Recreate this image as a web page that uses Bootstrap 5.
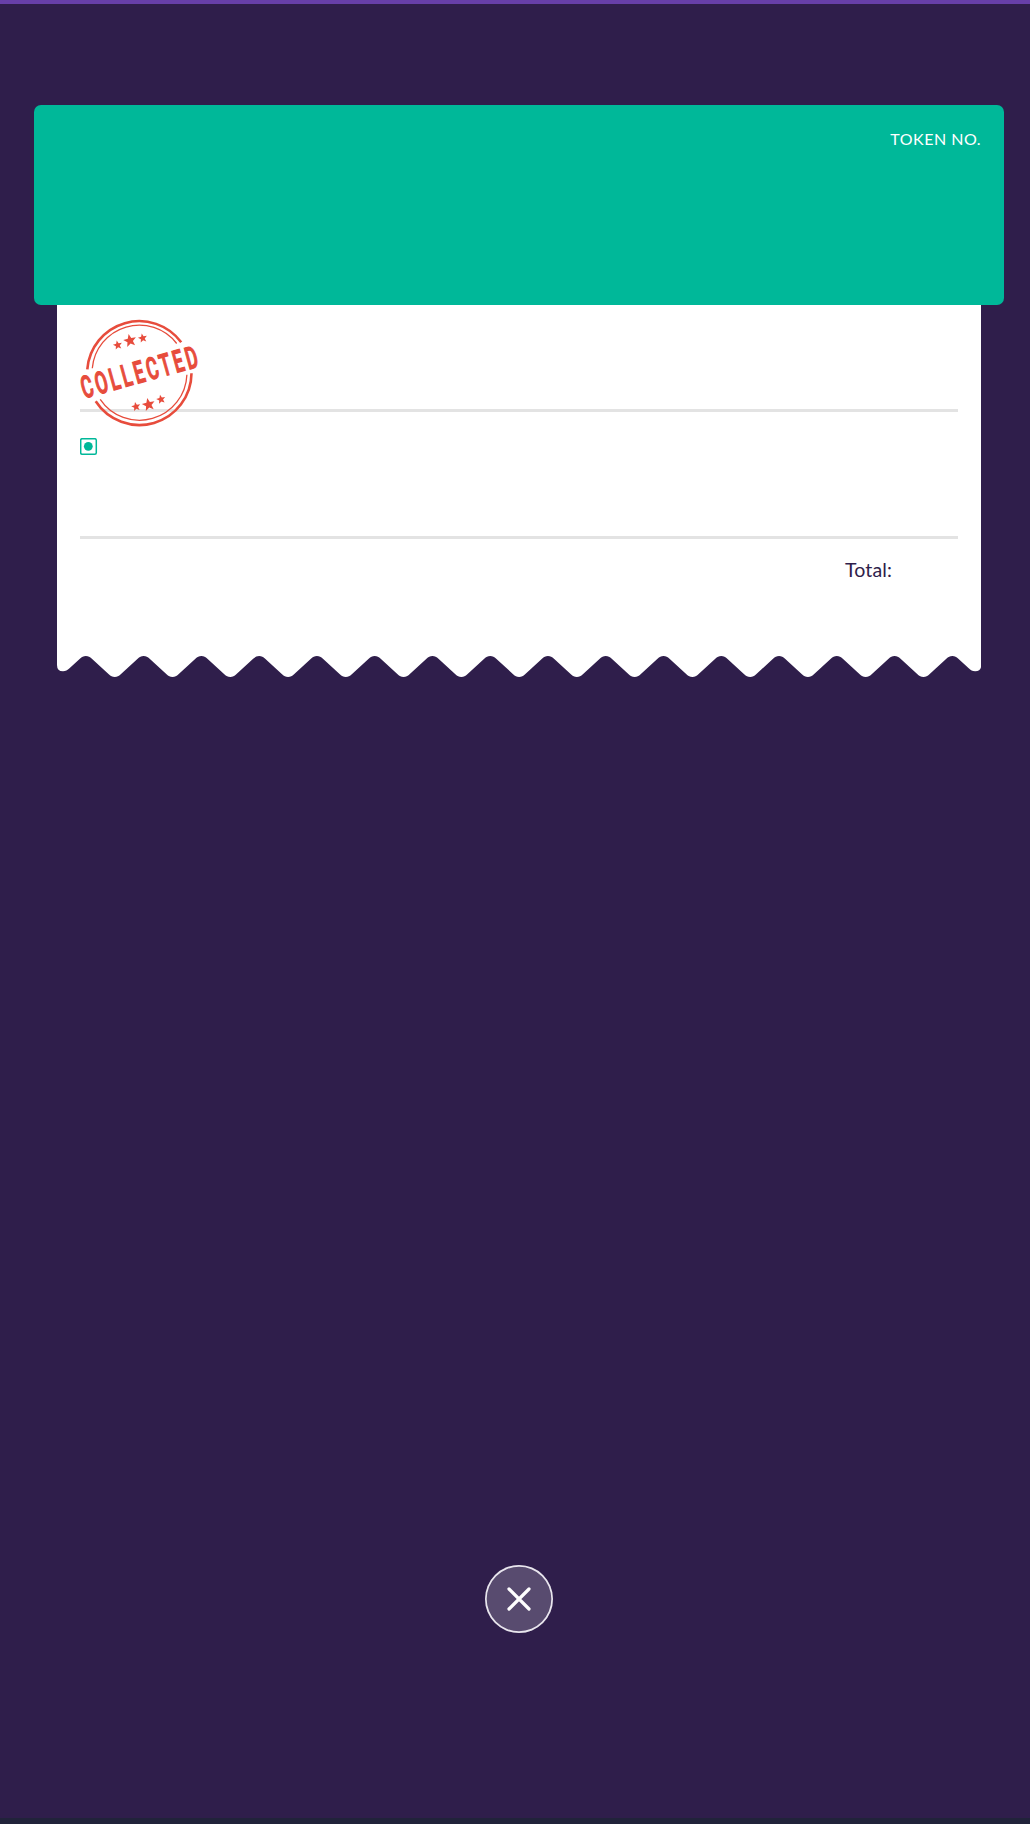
<!DOCTYPE html>
<html lang="en">
<head>
<meta charset="utf-8">
<meta name="viewport" content="width=device-width, initial-scale=1">
<title>Order token</title>
<link href="https://cdn.jsdelivr.net/npm/bootstrap@5.3.0/dist/css/bootstrap.min.css" rel="stylesheet">
<style>
body{background:#2f1e4b;color:#2f1e4b;font-family:Lato,"Open Sans",sans-serif}
.screen{height:1824px;border-top:4px solid #673fa8;border-bottom:6px solid #21233a}
.ticket{margin:101px 25.7px 0 33.5px}
.token-head{height:200px;background:#00b899;border-radius:7px;padding:23px 23.2px}
.token-label{font-size:16px;line-height:24px;letter-spacing:.5px;margin-top:-1px}
.receipt{margin:0 23.3px 0 23.3px}
.receipt-body{height:350.7px;padding:0 23px}
.order-row{height:107px;border-bottom:3px solid #e3e3e3}
.item-row{height:127px;border-bottom:3px solid #e3e3e3;padding-top:26px}
.total-row{padding:16px 66px 0 0;font-size:19.6px;line-height:29px;letter-spacing:.1px}
.stamp{left:17px;top:5px}
.torn{height:22px;margin-top:-.2px}
.close-btn{width:68px;height:68px;background:rgba(255,255,255,.2);border:0;box-shadow:inset 0 0 0 1.7px #e9e6ee;margin:0 0 185px 7px}
</style>
<script src="https://cdn.jsdelivr.net/npm/bootstrap@5.3.0/dist/js/bootstrap.bundle.min.js"></script>
</head>
<body>
<main class="screen d-flex flex-column">
  <section class="ticket">
    <header class="token-head d-flex justify-content-end align-items-start text-white">
      <span class="token-label">TOKEN NO.</span>
    </header>
    <div class="receipt position-relative">
      <div class="receipt-body bg-white">
        <div class="order-row"></div>
        <div class="item-row">
          <svg class="d-block" width="18" height="18" viewBox="0 0 18 18"><rect x=".7" y=".7" width="15.6" height="15.6" rx="1.5" fill="none" stroke="#00b899" stroke-width="1.5"/><circle cx="8.3" cy="8.3" r="4.4" fill="#00b899"/></svg>
        </div>
        <div class="total-row d-flex justify-content-end"><span>Total:</span></div>
      </div>
      <svg class="torn d-block w-100" viewBox="0 0 924 22" preserveAspectRatio="none"><path id="torn-edge" fill="#fff"/></svg>
      <svg class="stamp position-absolute" width="130" height="130" viewBox="74 310 130 130" fill="#e74c3c" role="img" aria-label="Collected">
        <g fill="none" stroke="#e74c3c">
          <path stroke-width="2.6" d="M87.3 369.3A52.1 52.1 0 0 1 181.2 342.3M95.7 401.3A52.1 52.1 0 0 0 191.5 373.3"/>
          <path stroke-width="1.3" d="M92.3 368.3A47.2 47.2 0 0 1 176.7 343.5M100.2 399.3A47.4 47.4 0 0 0 186.9 374.7"/>
        </g>
        <text transform="translate(138.9 371.9) rotate(-15.5) scale(.58 1)" x="-103" y="10.9" textLength="207" font-family="Roboto" font-weight="500" font-size="30.5" stroke="#e74c3c" stroke-width="1.1" vector-effect="non-scaling-stroke">COLLECTED</text>
        <defs><path id="star" d="M0-1 .26-.34 .95-.31 .41.13 .59.81 0 .43-.59.81-.41.13-.95-.31-.26-.34Z"/></defs>
        <use href="#star" transform="translate(117.7 345.2) rotate(-12) scale(4.8)"/>
        <use href="#star" transform="translate(130 340.7) rotate(-12) scale(6.8)"/>
        <use href="#star" transform="translate(142.7 338.2) rotate(-12) scale(4.8)"/>
        <use href="#star" transform="translate(136 406.7) rotate(-12) scale(4.8)"/>
        <use href="#star" transform="translate(148.6 404.7) rotate(-12) scale(6.8)"/>
        <use href="#star" transform="translate(161 399.4) rotate(-12) scale(4.8)"/>
      </svg>
    </div>
  </section>
  <button type="button" class="close-btn btn rounded-circle p-0 mt-auto align-self-center d-flex align-items-center justify-content-center" aria-label="Close">
    <svg width="26" height="26" viewBox="0 0 26 26"><path d="M3 3 23 23M23 3 3 23" stroke="#fff" stroke-width="3.2" stroke-linecap="round"/></svg>
  </button>
</main>
<script>
// Sixteen rounded teeth along the bottom edge of the receipt
const down = 'c2.5 0 4 1 6 2.8l16.875 15.4c2 1.8 3.5 2.8 6 2.8';
const up = 'c2.5 0 4-1 6-2.8l16.875-15.4c2-1.8 3.5-2.8 6-2.8';
document.getElementById('torn-edge').setAttribute('d',
  'M0 0V9q0 6.3 6 6.3c2.5 0 4.5-1.3 6.5-3.1L22.875 2.8c2-1.8 3.5-2.8 6-2.8' +
  (down + up).repeat(15) +
  'c2.5 0 4 1 6 2.8L911.5 12.2c2 1.8 3.5 3.1 6.5 3.1q6 0 6-6.3V0Z');
</script>
</body>
</html>
